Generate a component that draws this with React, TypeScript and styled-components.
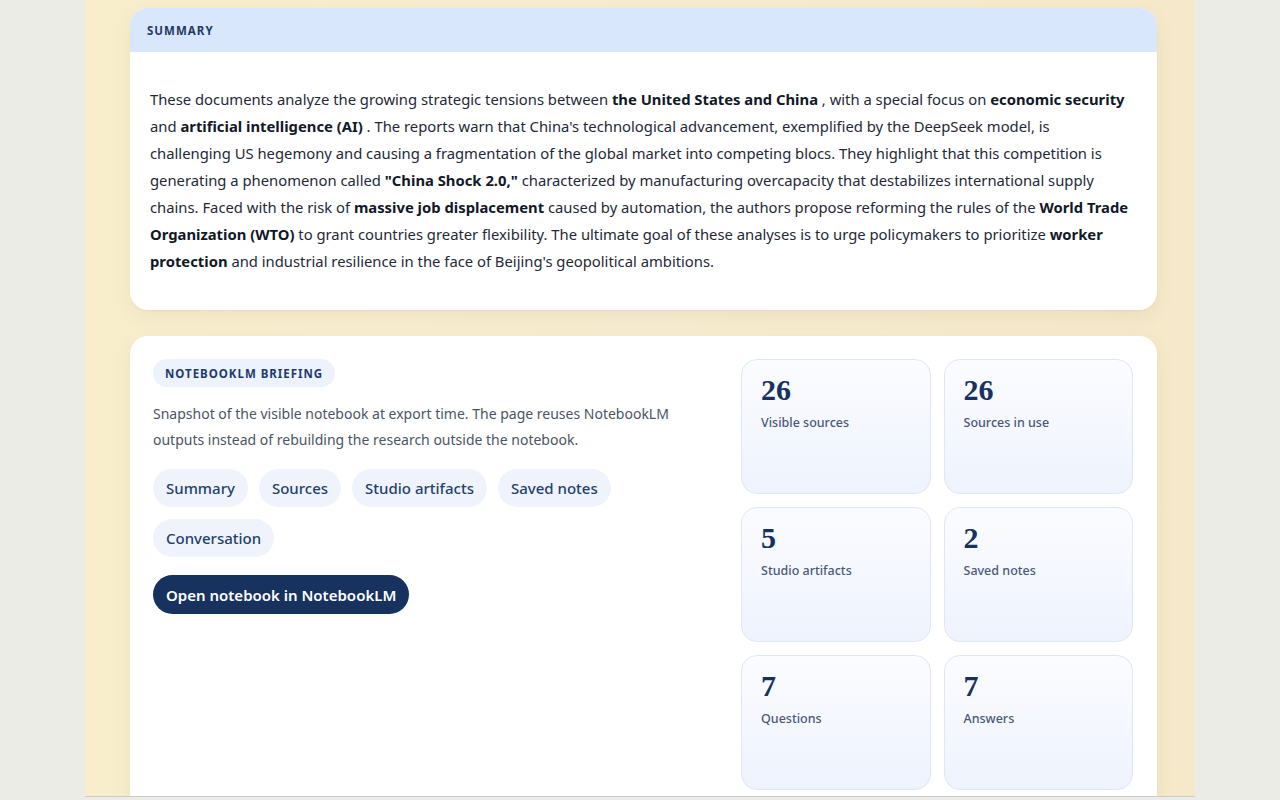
import React from 'react';
import styled, { createGlobalStyle } from 'styled-components';

const GlobalStyle = createGlobalStyle`
  html, body {
    margin: 0;
    padding: 0;
    background: #ecece7;
    font-family: 'Noto Sans', 'Open Sans', sans-serif;
    overflow: hidden;
  }
`;

const Viewport = styled.div`
  height: 800px;
  display: flex;
  justify-content: center;
  overflow: hidden;
`;

const Column = styled.main`
  width: 1110px;
  height: 797px;
  box-sizing: border-box;
  padding: 8px 38px 0 45px;
  background: linear-gradient(90deg, #f9eecb 0%, #f7ecd0 50%, #f5e9c9 100%);
  border-bottom: 1px solid #c9c9c6;
  display: flex;
  flex-direction: column;
  gap: 26px;
  overflow: hidden;
`;

const Card = styled.section`
  background: #ffffff;
  border-radius: 18px;
  box-shadow: 0 6px 18px rgba(120, 100, 50, 0.08), 0 1px 2px rgba(0, 0, 0, 0.04);
  overflow: hidden;
  flex-shrink: 0;
`;

const CardHeader = styled.header`
  height: 44px;
  background: #d9e7fd;
  display: flex;
  align-items: center;
  padding: 0 17px;
  font-size: 11.5px;
  font-weight: 700;
  letter-spacing: 0.09em;
  color: #1f3a5f;
`;

const SummaryBody = styled.p`
  margin: 0;
  padding: 34px 23px 35px 20px;
  font-size: 14.8px;
  line-height: 27px;
  color: #1f2937;

  strong {
    color: #111827;
    font-weight: 700;
  }
`;

const BriefingCard = styled(Card)`
  display: grid;
  grid-template-columns: 1fr 392px;
  gap: 24px;
  padding: 23px 24px 24px 23px;
`;

const Intro = styled.div`
  display: flex;
  flex-direction: column;
  align-items: flex-start;
`;

const Badge = styled.span`
  display: inline-flex;
  align-items: center;
  height: 28px;
  padding: 0 12px;
  border-radius: 999px;
  background: #edf3fd;
  color: #1e3a6e;
  font-size: 11.5px;
  font-weight: 700;
  letter-spacing: 0.085em;
`;

const Lead = styled.p`
  margin: 14px 0 0;
  font-size: 14px;
  line-height: 26px;
  color: #4b5563;
`;

const ChipRow = styled.nav`
  display: flex;
  flex-wrap: wrap;
  gap: 12px 11px;
  margin-top: 16px;
`;

const Chip = styled.a`
  display: inline-flex;
  align-items: center;
  height: 38px;
  padding: 0 13px;
  border-radius: 999px;
  background: #eff4fc;
  color: #23416b;
  font-size: 15px;
  font-weight: 500;
  text-decoration: none;
`;

const OpenButton = styled.a`
  display: inline-flex;
  align-items: center;
  height: 39px;
  margin-top: 18px;
  padding: 0 13px;
  border-radius: 999px;
  background: #17325e;
  color: #ffffff;
  font-size: 15px;
  font-weight: 600;
  text-decoration: none;
`;

const StatGrid = styled.div`
  display: grid;
  grid-template-columns: repeat(2, 1fr);
  grid-auto-rows: 135px;
  gap: 13px;
`;

const StatCard = styled.div`
  box-sizing: border-box;
  padding: 12px 19px;
  border: 1px solid #dfe7f4;
  border-radius: 16px;
  background: linear-gradient(180deg, #fbfcff 0%, #eef3fd 100%);
`;

const StatValue = styled.div`
  font-family: 'Liberation Serif', 'DejaVu Serif', serif;
  font-size: 30px;
  font-weight: 700;
  line-height: 36px;
  color: #17325e;
`;

const StatLabel = styled.div`
  margin-top: 6px;
  font-size: 12.5px;
  font-weight: 500;
  color: #4a5878;
`;

const chips = ['Summary', 'Sources', 'Studio artifacts', 'Saved notes', 'Conversation'];

const stats = [
  { value: '26', label: 'Visible sources' },
  { value: '26', label: 'Sources in use' },
  { value: '5', label: 'Studio artifacts' },
  { value: '2', label: 'Saved notes' },
  { value: '7', label: 'Questions' },
  { value: '7', label: 'Answers' },
];

export default function App() {
  return (
    <Viewport>
      <GlobalStyle />
      <Column>
        <Card>
          <CardHeader>SUMMARY</CardHeader>
          <SummaryBody>
            These documents analyze the growing strategic tensions between <strong>the United States and China</strong> , with a
            special focus on <strong>economic security</strong> and <strong>artificial intelligence (AI)</strong> . The reports warn
            that China's technological advancement, exemplified by the DeepSeek model, is challenging US hegemony and causing a
            fragmentation of the global market into competing blocs. They highlight that this competition is generating a
            phenomenon called <strong>"China Shock 2.0,"</strong> characterized by manufacturing overcapacity that destabilizes
            international supply chains. Faced with the risk of <strong>massive job displacement</strong> caused by automation, the
            authors propose reforming the rules of the <strong>World Trade Organization (WTO)</strong> to grant countries greater
            flexibility. The ultimate goal of these analyses is to urge policymakers to prioritize <strong>worker protection</strong>{' '}
            and industrial resilience in the face of Beijing's geopolitical ambitions.
          </SummaryBody>
        </Card>

        <BriefingCard>
          <Intro>
            <Badge>NOTEBOOKLM BRIEFING</Badge>
            <Lead>
              Snapshot of the visible notebook at export time. The page reuses NotebookLM outputs instead of rebuilding the
              research outside the notebook.
            </Lead>
            <ChipRow>
              {chips.map((c) => (
                <Chip key={c} href="#">
                  {c}
                </Chip>
              ))}
            </ChipRow>
            <OpenButton href="#">Open notebook in NotebookLM</OpenButton>
          </Intro>
          <StatGrid>
            {stats.map((s) => (
              <StatCard key={s.label}>
                <StatValue>{s.value}</StatValue>
                <StatLabel>{s.label}</StatLabel>
              </StatCard>
            ))}
          </StatGrid>
        </BriefingCard>
      </Column>
    </Viewport>
  );
}
